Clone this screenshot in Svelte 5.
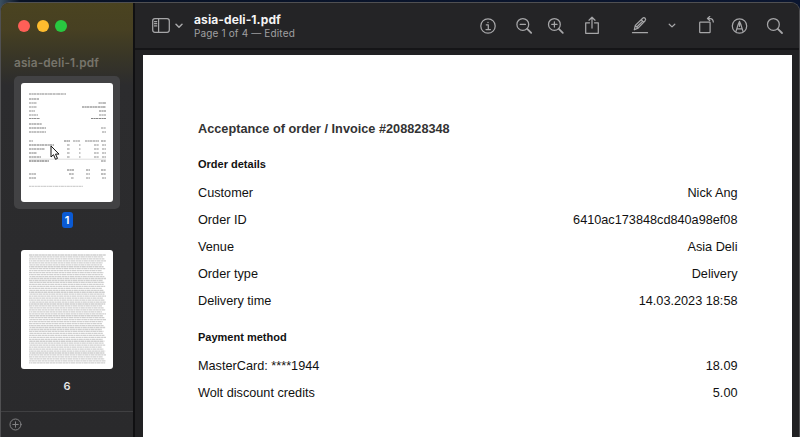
<script>
  const details = [
    ['Customer', 'Nick Ang'],
    ['Order ID', '6410ac173848cd840a98ef08'],
    ['Venue', 'Asia Deli'],
    ['Order type', 'Delivery'],
    ['Delivery time', '14.03.2023 18:58']
  ];
  const payment = [
    ['MasterCard: ****1944', '18.09'],
    ['Wolt discount credits', '5.00']
  ];
  // Preview lines: [x, y, width, opacity]
  const lines = [
    [8, 11, 37, .55], [8, 16, 10, .6],
    [8, 20, 8, .5], [77.5, 20, 7.5, .6],
    [8, 24, 8, .5], [61, 24, 24, .65],
    [8, 28, 6, .5], [78, 28, 7, .6],
    [8, 32, 9, .5], [78, 32, 7, .5],
    [8, 35.5, 11, .5], [70, 35.5, 15, .55],
    [8, 41, 13, .6], [8, 45, 17, .6], [80, 45, 5, .5],
    [8, 49, 17, .55], [81, 49, 4, .5],
    [8, 58, 4, .5], [43, 58, 6, .65], [52, 58, 7, .5], [64, 58, 14, .55], [80, 58, 5, .6],
    [8, 62, 25, .65], [46, 62, 3, .5], [58, 62, 1.5, .5], [73, 62, 5, .5], [81, 62, 4, .5],
    [8, 66, 16, .6], [46, 66, 3, .5], [58, 66, 1.5, .5], [73, 66, 5, .5], [81, 66, 4, .5],
    [8, 70, 8, .6], [46, 70, 3, .5], [58, 70, 1.5, .5], [73, 70, 5, .5], [81, 70, 4, .5],
    [8, 74, 12, .6], [46, 74, 3, .5], [58, 74, 1.5, .5], [73, 74, 5, .5], [81, 74, 4, .5],
    [8, 78, 20, .75], [80, 78, 5, .6],
    [46, 87, 7, .65], [65, 87, 4, .6], [80, 87, 5, .6],
    [8, 91, 7, .55], [48, 91, 5, .6], [65, 91, 4, .5], [80, 91, 5, .6],
    [8, 95, 7, .55], [50, 95, 3, .5], [65, 95, 4, .5], [81, 95, 4, .5]
  ];
  const dense = Array.from({ length: 56 }, (_, i) => ({
    y: 5 + i * 1.96,
    w: 77 - ((i * 7 + (i % 5) * 3) % 6) * .8
  }));
</script>

<div class="desktop">
  <div class="window">
    <aside>
      <div class="lights"><i class="red"></i><i class="yellow"></i><i class="green"></i></div>
      <div class="docname">asia-deli-1.pdf</div>
      <div class="selected">
        <svg class="thumb" width="92" height="119" viewBox="0 0 92 119">
          {#each lines as [x, y, w, o]}
            <path d="M{x} {y}h{w}" stroke="#222" stroke-opacity={o} stroke-width="1" stroke-dasharray="2.3 .4 1.4 .3 3 .5" />
          {/each}
          <path d="M8 76.2h77" stroke="#bbb" stroke-width=".5" />
          <path d="M8 103.3h54" stroke="#aaa" stroke-width=".7" stroke-dasharray="2 .4 3 .5" />
        </svg>
        <svg class="cursor" width="10" height="16" viewBox="0 0 10 16">
          <path d="M1 1v11l2.5-2.3 2 4.6 2-.9-2-4.3H9z" fill="#fff" stroke="#111" stroke-width="1" />
        </svg>
      </div>
      <div class="pageno active">1</div>
      <svg class="thumb second" width="92" height="119" viewBox="0 0 92 119">
        {#each dense as l, i}
          <path d="M8 {l.y}h{l.w}" stroke="#cfcfcf" stroke-width="1.3" stroke-dasharray="3 .4 1.8 .4 4 .5 2.4 .3" stroke-dashoffset={(i * 5) % 13} />
        {/each}
      </svg>
      <div class="pageno">6</div>
      <footer>
        <svg width="13" height="13" viewBox="0 0 13 13" class="ico">
          <circle cx="6.5" cy="6.5" r="5.5" /><path d="M3.8 6.5h5.4M6.5 3.8v5.4" />
        </svg>
      </footer>
    </aside>

    <section class="viewer">
      <header>
        <svg class="ico side" width="18" height="15" viewBox="0 0 18 15">
          <rect x=".7" y=".7" width="16.6" height="13.6" rx="2.2" /><path d="M6.6 1v13M2.5 3.5h2.2M2.5 5.7h2.2M2.5 7.9h2.2" />
        </svg>
        <svg class="ico chev" width="8" height="6" viewBox="0 0 8 6"><path d="m1 1.2 3 3 3-3" /></svg>
        <div class="title"><b>asia-deli-1.pdf</b><span>Page 1 of 4 — Edited</span></div>
        <div class="tools">
          <svg class="ico" style:margin-left="0px" width="18" height="20" viewBox="0 0 18 20">
            <circle cx="9" cy="10" r="7.2" /><path d="M7.3 8.8h2v4.6M7 13.5h4.4" /><circle cx="9" cy="6.5" r=".7" class="solid" />
          </svg>
          <svg class="ico" style:margin-left="18px" width="18" height="20" viewBox="0 0 18 20">
            <circle cx="7.8" cy="8.4" r="5.9" /><path d="M5.2 8.4h5.2" /><path d="m12.2 12.8 4 4" class="thick" />
          </svg>
          <svg class="ico" style:margin-left="14px" width="18" height="20" viewBox="0 0 18 20">
            <circle cx="7.4" cy="8.4" r="5.9" /><path d="M4.8 8.4H10M7.4 5.8V11" /><path d="m11.8 12.8 4 4" class="thick" />
          </svg>
          <svg class="ico" style:margin-left="18px" width="18" height="20" viewBox="0 0 18 20">
            <path d="M6.5 6.8H2.7v10.5h12.6V6.8h-3.8M9 12V1.3M6 4.2l3-3 3 3" />
          </svg>
          <svg class="ico" style:margin-left="30px" width="18" height="20" viewBox="0 0 18 20">
            <path d="M1.5 16.7h15M3.3 13.8l1-4.4 7.4-7.1c.8-.8 1.7-.7 2.4 0s.7 1.6 0 2.4l-7 7.4zM10.2 3.8l2.5 2.5M4.4 9.7l2.5 2.4M6 10.8l5.2-5.2" />
          </svg>
          <svg class="ico" style:margin-left="19px" width="8" height="6" viewBox="0 0 8 6"><path d="m1.2 1.2 2.8 2.7 2.8-2.7" /></svg>
          <svg class="ico" style:margin-left="22px" width="18" height="20" viewBox="0 0 18 20">
            <rect x="1.7" y="6.2" width="10.4" height="10.4" rx=".6" /><path d="M9.5 2.5h2.8c1.8 0 2.8 1 3 3.5M11.7.5l-2.2 2 2.2 2" />
          </svg>
          <svg class="ico" style:margin-left="14px" width="18" height="20" viewBox="0 0 18 20">
            <circle cx="9.5" cy="10" r="7.2" /><path d="m5.9 15.6 2.2-7 1.4-3.2 1.4 3.2 2.2 7M6.8 12.8h5.4M9.5 6v4" /><circle cx="9.5" cy="10.5" r=".6" class="solid" />
          </svg>
          <svg class="ico" style:margin-left="18px" width="18" height="20" viewBox="0 0 18 20">
            <circle cx="7.4" cy="8.4" r="5.9" /><path d="m11.8 12.8 4.2 4.2" class="thick" />
          </svg>
        </div>
      </header>
      <main>
        <article>
          <h1>Acceptance of order / Invoice #208828348</h1>
          <h2>Order details</h2>
          {#each details as [k, v]}<div class="row"><span>{k}</span><span>{v}</span></div>{/each}
          <h2 class="pay">Payment method</h2>
          {#each payment as [k, v]}<div class="row"><span>{k}</span><span>{v}</span></div>{/each}
        </article>
      </main>
    </section>
  </div>
</div>

<style>
  :global(body) { margin: 0; overflow: hidden; }
  * { box-sizing: border-box; }
  .desktop { width: 800px; height: 437px; padding-top: 2px; background: linear-gradient(90deg, #3c5060, #081225 20px, #0b1630); overflow: hidden; font-family: Inter, "Liberation Sans", sans-serif; }
  .window { display: flex; height: 435px; border: 1px solid #505052; border-bottom: 0; border-radius: 9px 9px 0 0; overflow: hidden; background: #232325; }
  aside { width: 134px; flex: none; display: flex; flex-direction: column; align-items: center; background: linear-gradient(#4a4320 0, #474022 26px, #3a3726 50px, #2c2c2e 82px, #2a2a2c 100%); border-right: 2px solid #101012; }
  .lights { display: flex; gap: 7px; width: 100%; padding: 17px 0 0 17px; }
  .lights i { width: 12px; height: 12px; border-radius: 50%; margin-right: -.5px; }
  .red { background: #ff5f57; } .yellow { background: #febc2e; } .green { background: #28c840; }
  .docname { align-self: flex-start; margin: 23px 0 0 13px; height: 20px; line-height: 17px; font-size: 11.8px; letter-spacing: .15px; font-weight: 600; color: #77746b; white-space: nowrap; }
  .selected { position: relative; width: 106px; height: 133px; padding: 7px; border-radius: 5px; background: #424244; margin-top: .5px; }
  .thumb { display: block; flex: none; background: #fff; border-radius: 3px; }
  .cursor { position: absolute; left: 36px; top: 69px; }
  .pageno { height: 16px; margin-top: 3px; padding: 0 3px; line-height: 16px; border-radius: 3px; font-size: 11px; font-weight: 600; color: #e8e8e8; }
  .active { width: 11px; padding: 0; text-align: center; background: #0a5ad4; color: #fff; }
  .second { margin-top: 22px; }
  .second + .pageno { margin-top: 9px; }
  footer { margin-top: auto; width: 100%; height: 26px; border-top: 1px solid #404042; padding: 6px 0 0 8px; }
  footer .ico { display: block; stroke: #828284; stroke-width: 1; }
  .viewer { flex: 1; display: flex; flex-direction: column; min-width: 0; }
  header { height: 47px; flex: none; display: flex; align-items: center; background: #242426; border-bottom: 2px solid #151517; padding-left: 17px; }
  .ico { display: block; flex: none; fill: none; stroke: #a6a6a8; stroke-width: 1.25; stroke-linecap: round; stroke-linejoin: round; }
  .thick { stroke-width: 1.8; }
  .solid { fill: #a6a6a8; stroke: none; }
  .side { margin-top: 0; }
  .chev { margin: 1px 0 0 5px; stroke-width: 1.5; }
  .title { display: flex; flex-direction: column; margin: 1px 0 0 11px; width: 150px; white-space: nowrap; }
  .title b { font-size: 12px; line-height: 14px; color: #f4f4f4; font-weight: 700; letter-spacing: .1px; }
  .title span { font-size: 10px; line-height: 13px; color: #a0a0a2; letter-spacing: .15px; }
  .tools { display: flex; align-items: center; margin-left: auto; padding-right: 15px; }
  main { flex: 1; padding: 5px 7px 0 8px; background: #212123; }
  article { height: 100%; background: #fff; padding: 66px 54.5px 0 55px; font-family: "Liberation Sans", Arial, sans-serif; color: #111; }
  h1 { margin: 0; font-size: 12.73px; line-height: 16px; color: #333; white-space: nowrap; }
  h2 { margin: 19px 0 7.5px; font-size: 11px; line-height: 16px; }
  .row { display: flex; justify-content: space-between; height: 27px; line-height: 27px; font-size: 12.7px; white-space: nowrap; }
  .pay { margin: 14px 0 8px; }
</style>
